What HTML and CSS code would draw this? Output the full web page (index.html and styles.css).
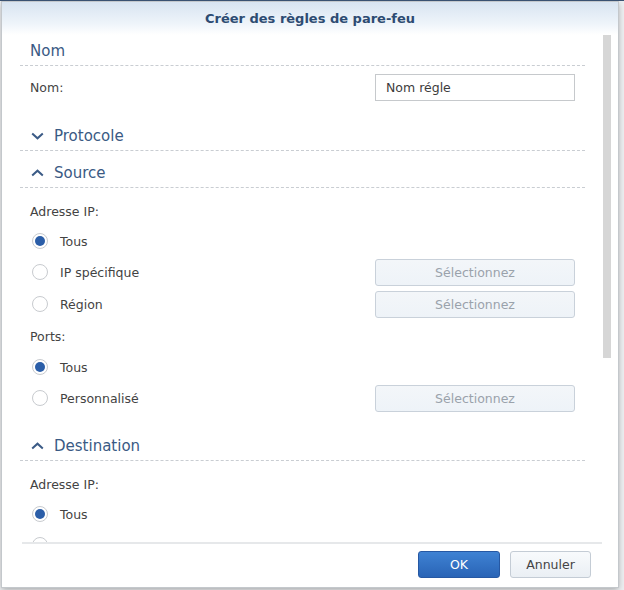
FILE: index.html
```html
<!DOCTYPE html>
<html lang="fr">
<head>
<meta charset="utf-8">
<title>Créer des règles de pare-feu</title>
<link rel="stylesheet" href="styles.css">
</head>
<body>
<div class="dialog">
  <div class="titlebar">Créer des règles de pare-feu</div>
  <div class="content">
    <div class="scroll">
      <div class="section">
        <div class="header plain">Nom</div>
        <div class="body body-name">
          <div class="row row-input">
            <span class="label">Nom:</span>
            <div class="input">Nom régle</div>
          </div>
        </div>
      </div>

      <div class="section">
        <div class="header">
          <svg class="chev" width="13" height="8" viewBox="0 0 13 8"><path d="M1.2 1.5 L6.5 6.3 L11.8 1.5" fill="none" stroke="#3b5b86" stroke-width="2"/></svg>
          <span>Protocole</span>
        </div>
      </div>

      <div class="section">
        <div class="header">
          <svg class="chev" width="13" height="8" viewBox="0 0 13 8"><path d="M1.2 6.5 L6.5 1.7 L11.8 6.5" fill="none" stroke="#3b5b86" stroke-width="2"/></svg>
          <span>Source</span>
        </div>
        <div class="body">
          <div class="row"><span class="label">Adresse IP:</span></div>
          <div class="row"><span class="radio on"></span><span class="label">Tous</span></div>
          <div class="row tall"><span class="radio"></span><span class="label">IP spécifique</span><div class="btn-select">Sélectionnez</div></div>
          <div class="row tall"><span class="radio"></span><span class="label">Région</span><div class="btn-select">Sélectionnez</div></div>
          <div class="row tall"><span class="label">Ports:</span></div>
          <div class="row"><span class="radio on"></span><span class="label">Tous</span></div>
          <div class="row tall"><span class="radio"></span><span class="label">Personnalisé</span><div class="btn-select">Sélectionnez</div></div>
        </div>
      </div>

      <div class="section">
        <div class="header">
          <svg class="chev" width="13" height="8" viewBox="0 0 13 8"><path d="M1.2 6.5 L6.5 1.7 L11.8 6.5" fill="none" stroke="#3b5b86" stroke-width="2"/></svg>
          <span>Destination</span>
        </div>
        <div class="body">
          <div class="row"><span class="label">Adresse IP:</span></div>
          <div class="row"><span class="radio on"></span><span class="label">Tous</span></div>
          <div class="row tall"><span class="radio"></span></div>
        </div>
      </div>
    </div>
    <div class="scrollbar"></div>
  </div>
  <div class="footer">
    <div class="btn ok">OK</div>
    <div class="btn cancel">Annuler</div>
  </div>
</div>
</body>
</html>
```
FILE: styles.css
```css
html, body {
  margin: 0;
  padding: 0;
}
body {
  width: 624px;
  height: 590px;
  overflow: hidden;
  background: #eceef0;
  border-top: 1px solid #3a5272;
  box-sizing: border-box;
  font-family: "DejaVu Sans", Verdana, sans-serif;
}
.dialog {
  margin: 1px 0 0 2px;
  width: 616px;
  height: 585px;
  background: #fff;
  box-shadow: 0 0 0 1px #c4c8cc, 0 2px 6px rgba(0,0,0,0.35);
  display: flex;
  flex-direction: column;
}
.titlebar {
  height: 33px;
  flex: none;
  background: linear-gradient(#d8e4f1, #eef4fa 65%, #ffffff);
  color: #2d4b72;
  font-weight: bold;
  font-size: 13px;
  line-height: 33px;
  text-align: center;
}
.content {
  flex: 1;
  position: relative;
  overflow: hidden;
}
.scroll {
  padding: 2px 33px 0 18px;
}
.scrollbar {
  position: absolute;
  left: 601px;
  top: 0;
  width: 8px;
  height: 323px;
  background: #d6d6d6;
}
.section + .section {
  margin-top: 8px;
}
.header {
  height: 28px;
  border-bottom: 1px dashed #c9cdd2;
  display: flex;
  align-items: center;
  padding-left: 11px;
  font-size: 15px;
  color: #3a5a84;
}
.header.plain {
  padding-left: 10px;
}
.chev {
  margin-right: 10px;
  flex: none;
}
.body {
  padding: 8px 10px 10px 10px;
}
.body.body-name {
  padding-top: 9px;
  padding-bottom: 11px;
}
.row {
  height: 30px;
  display: flex;
  align-items: center;
  font-size: 12.5px;
  color: #434343;
}
.row.tall {
  height: 32px;
}
.row-input {
  height: 32px;
  margin-top: -4px;
  justify-content: space-between;
}
.label {
  white-space: nowrap;
}
.input {
  width: 200px;
  height: 27px;
  box-sizing: border-box;
  border: 1px solid #c6c9cc;
  padding-left: 10px;
  line-height: 25px;
  font-size: 12.5px;
  color: #3c3c3c;
}
.radio {
  width: 16px;
  height: 16px;
  box-sizing: border-box;
  border: 1px solid #c8cbcf;
  border-radius: 50%;
  background: #fff;
  margin-left: 2px;
  margin-right: 12px;
  flex: none;
  display: flex;
  align-items: center;
  justify-content: center;
}
.radio.on::after {
  content: "";
  width: 10px;
  height: 10px;
  border-radius: 50%;
  background: #2b5ea8;
}
.btn-select {
  margin-left: auto;
  width: 200px;
  height: 27px;
  box-sizing: border-box;
  border: 1px solid #c9d1da;
  border-radius: 3px;
  background: linear-gradient(#f3f6f9, #eef3f8);
  color: #9aa2ab;
  font-size: 12.5px;
  line-height: 25px;
  text-align: center;
}
.footer {
  flex: none;
  height: 45px;
  margin: 0 16px 0 20px;
  border-top: 2px solid #e6e8ea;
  display: flex;
  justify-content: flex-end;
  align-items: flex-start;
  padding-top: 7px;
  padding-right: 11px;
  gap: 10px;
  box-sizing: border-box;
}
.btn {
  width: 82px;
  height: 27px;
  box-sizing: border-box;
  border-radius: 3px;
  font-size: 12.5px;
  line-height: 25px;
  text-align: center;
}
.btn.ok {
  background: linear-gradient(#3f82d3, #2964b6);
  border: 1px solid #2658a3;
  color: #fff;
}
.btn.cancel {
  width: 81px;
  background: linear-gradient(#f8fafc, #eaeff4);
  border: 1px solid #c4ccd5;
  color: #444;
}
```
